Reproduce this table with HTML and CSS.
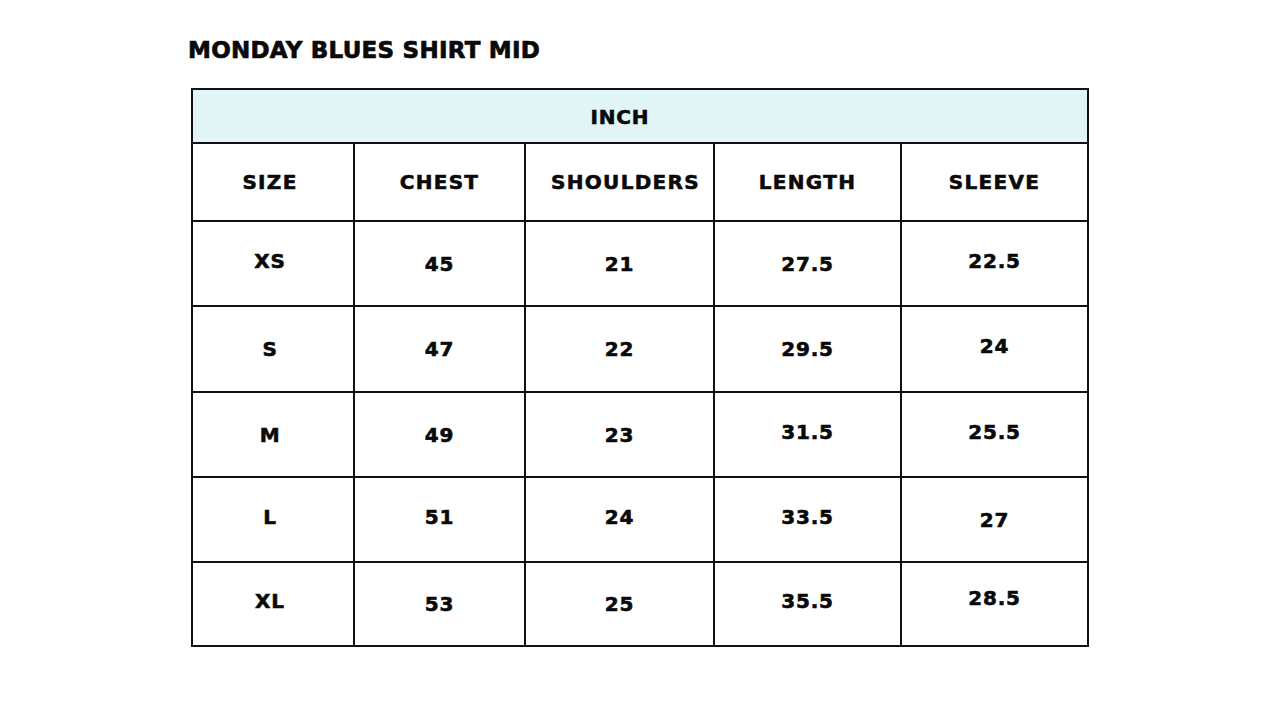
FILE: index.html
```html
<!DOCTYPE html>
<html>
<head>
<meta charset="utf-8">
<link rel="stylesheet" href="styles.css">
</head>
<body>
<div class="page">
  <h1 class="title">MONDAY BLUES SHIRT MID</h1>
  <div class="chart">
    <div class="unit">INCH</div>
    <div class="cell head first">SIZE</div>
    <div class="cell head">CHEST</div>
    <div class="cell head shift">SHOULDERS</div>
    <div class="cell head">LENGTH</div>
    <div class="cell head">SLEEVE</div>

    <div class="cell first"><span class="up">XS</span></div>
    <div class="cell">45</div>
    <div class="cell">21</div>
    <div class="cell">27.5</div>
    <div class="cell"><span class="up">22.5</span></div>

    <div class="cell first">S</div>
    <div class="cell">47</div>
    <div class="cell">22</div>
    <div class="cell">29.5</div>
    <div class="cell"><span class="up">24</span></div>

    <div class="cell first">M</div>
    <div class="cell">49</div>
    <div class="cell">23</div>
    <div class="cell"><span class="up">31.5</span></div>
    <div class="cell"><span class="up">25.5</span></div>

    <div class="cell first"><span class="up">L</span></div>
    <div class="cell"><span class="up">51</span></div>
    <div class="cell"><span class="up">24</span></div>
    <div class="cell"><span class="up">33.5</span></div>
    <div class="cell">27</div>

    <div class="cell first"><span class="up">XL</span></div>
    <div class="cell">53</div>
    <div class="cell">25</div>
    <div class="cell"><span class="up">35.5</span></div>
    <div class="cell"><span class="up2">28.5</span></div>
  </div>
</div>
</body>
</html>
```
FILE: styles.css
```css
html, body {
  margin: 0;
  padding: 0;
  background: #ffffff;
}
body {
  font-family: "DejaVu Sans", "Liberation Sans", sans-serif;
  color: #0a0a0a;
}
.page {
  width: 1280px;
  height: 720px;
  padding: 36px 0 0 188px;
  box-sizing: border-box;
}
.title {
  margin: 0 0 24px 0;
  font-size: 23px;
  line-height: 28px;
  font-weight: 700;
  letter-spacing: 0.25px;
  -webkit-text-stroke: 0.7px #0a0a0a;
}
.chart {
  margin-left: 3px;
  display: grid;
  grid-template-columns: 160px 169px 187px 185px 185px;
  grid-template-rows: 52px 76px 83px 84px 83px 83px 82px;
  gap: 2px;
  padding: 2px;
  background: #111111;
  width: max-content;
}
.unit {
  grid-column: 1 / 6;
  background: #e1f5f7;
  display: flex;
  align-items: center;
  justify-content: center;
  font-size: 20px;
  font-weight: 700;
  letter-spacing: 0.8px;
  -webkit-text-stroke: 0.6px #0a0a0a;
  padding: 1px 40px 0 0;
}
.cell {
  background: #ffffff;
  display: flex;
  align-items: center;
  justify-content: center;
  font-size: 20px;
  font-weight: 700;
  letter-spacing: 0.8px;
  -webkit-text-stroke: 0.6px #0a0a0a;
}
.head {
  letter-spacing: 1.3px;
}
.first {
  padding-right: 6px;
}
.shift {
  padding-left: 12px;
}
.up {
  position: relative;
  top: -3px;
}
.up2 {
  position: relative;
  top: -6px;
}
```
